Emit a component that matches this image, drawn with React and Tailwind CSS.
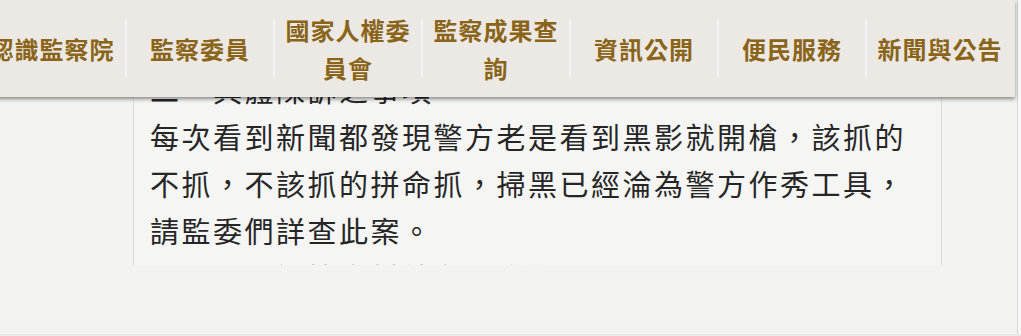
import React from "react";

const navItems = ["認識監察院", "監察委員", "國家人權委員會", "監察成果查詢", "資訊公開", "便民服務", "新聞與公告"];

const lines = [
  "二、具體陳訴之事項",
  "每次看到新聞都發現警方老是看到黑影就開槍，該抓的",
  "不抓，不該抓的拼命抓，掃黑已經淪為警方作秀工具，",
  "請監委們詳查此案。",
  "　　相關證據資料請參閱附件",
];

export default function App() {
  return (
    <div className="relative w-[1021px] h-[336px] overflow-hidden bg-[#f3f3f2]" style={{ fontFamily: '"Noto Sans CJK TC", "Noto Sans", sans-serif' }}>
      <div className="flex h-full">
        <div className="w-[133px] shrink-0" />
        <div className="w-[809px] h-[265px] overflow-hidden border-x border-[#dcdcdc] bg-[#f5f5f4] pt-[66px] pl-[16px]">
          {lines.map((l, i) => (
            <div key={i} className="text-[29px] leading-[47px] tracking-[2.5px] text-[#262626] whitespace-nowrap">
              {l}
            </div>
          ))}
        </div>
        <div className="flex-1" />
        <div className="w-px bg-[#d4d4d4]" />
        <div className="w-[3px] bg-[#f7f7f7]" />
      </div>
      <div className="absolute left-0 right-0 bottom-0 h-[2px] bg-[#e9e9e8]" />

      <nav className="absolute top-0 left-[-23px] w-[1038px] h-[97px] bg-[#ece8e4] shadow-[0_2px_4px_rgba(0,0,0,0.45)] flex">
        {navItems.map((t, i) => (
          <div key={t} className="w-[148px] h-full flex items-center">
            <div className={i === 0 ? "w-[2px] h-[57px] self-center" : "w-[2px] h-[57px] self-center bg-[#f6f4f1]"} />
            <div className="flex-1 px-[10px] text-center text-[24px] font-bold leading-[38px] tracking-[1px] text-[#8a6519]">
              {t}
            </div>
          </div>
        ))}
      </nav>
    </div>
  );
}
